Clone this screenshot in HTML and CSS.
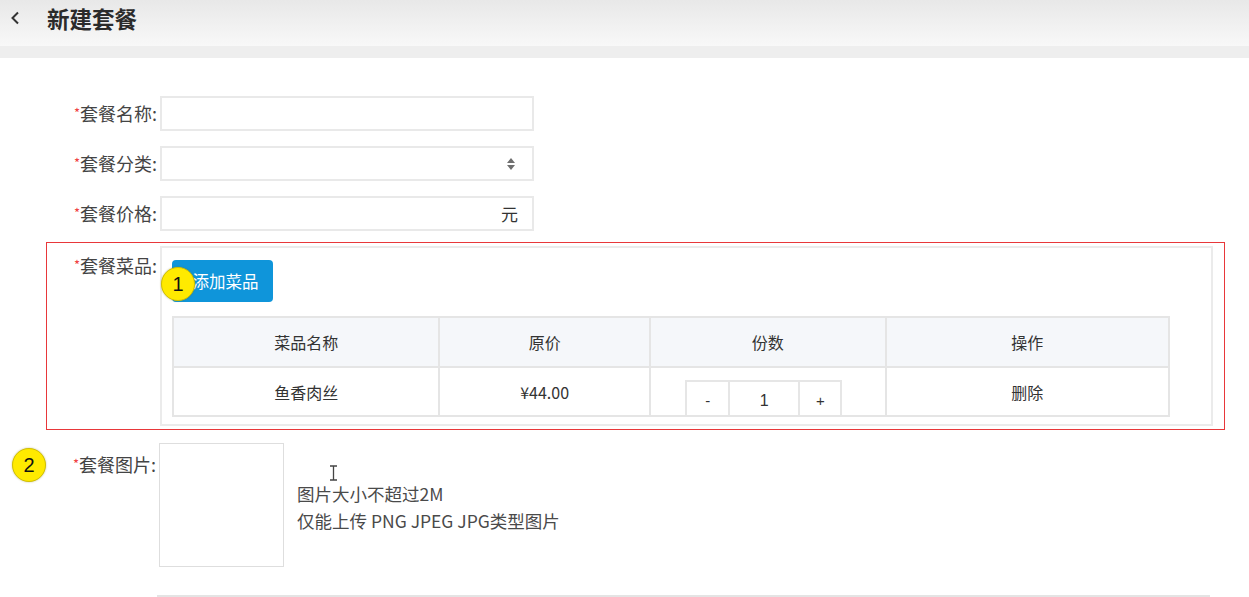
FILE: index.html
```html
<!DOCTYPE html>
<html lang="zh-CN">
<head>
<meta charset="utf-8">
<title>新建套餐</title>
<link rel="stylesheet" href="styles.css">
</head>
<body>
<div class="page">
  <div class="header">
    <svg class="back" width="10" height="14" viewBox="0 0 10 14"><path d="M8 1.5 L2.5 7 L8 12.5" stroke="#333" stroke-width="2" fill="none"/></svg>
    <span class="title">新建套餐</span>
  </div>
  <div class="band"></div>

  <div class="form">
    <div class="row">
      <label class="label"><span class="star">*</span>套餐名称:</label>
      <div class="input"></div>
    </div>
    <div class="row">
      <label class="label"><span class="star">*</span>套餐分类:</label>
      <div class="input select">
        <svg class="updown" width="10" height="14" viewBox="0 0 10 14"><path d="M5 1 L9 6 L1 6 Z M5 13 L1 8 L9 8 Z" fill="#6f6f6f"/></svg>
      </div>
    </div>
    <div class="row">
      <label class="label"><span class="star">*</span>套餐价格:</label>
      <div class="input price"><span class="unit">元</span></div>
    </div>

    <div class="row dish-row">
      <label class="label"><span class="star">*</span>套餐菜品:</label>
      <div class="dish-box">
        <button class="add-btn">添加菜品</button>
        <table class="dish-table">
          <thead>
            <tr><th class="c1">菜品名称</th><th class="c2">原价</th><th class="c3">份数</th><th class="c4">操作</th></tr>
          </thead>
          <tbody>
            <tr>
              <td>鱼香肉丝</td>
              <td>¥44.00</td>
              <td class="count-cell">
                <div class="counter"><span class="minus">-</span><span class="num">1</span><span class="plus">+</span></div>
              </td>
              <td>删除</td>
            </tr>
          </tbody>
        </table>
      </div>
    </div>

    <div class="row img-row">
      <label class="label"><span class="star">*</span>套餐图片:</label>
      <div class="upload"></div>
      <div class="tips">
        <div>图片大小不超过2M</div>
        <div>仅能上传 PNG JPEG JPG类型图片</div>
      </div>
    </div>

    <div class="footer-line"></div>
  </div>

  <span class="marker m1">1</span>
  <span class="marker m2">2</span>
  <svg class="ibeam" width="9" height="16" viewBox="0 0 9 16"><path d="M1 1 H8 M4.5 1 V15 M1 15 H8" stroke="#444" stroke-width="1.3" fill="none"/></svg>
</div>
</body>
</html>
```

FILE: styles.css
```css
* { box-sizing: border-box; }

body {
  margin: 0;
  background: #fff;
  font-family: "Noto Sans CJK SC", "Microsoft YaHei", sans-serif;
  color: #333;
}

.page {
  position: relative;
  width: 1249px;
  height: 597px;
  overflow: hidden;
}

.header {
  height: 46px;
  background: linear-gradient(#e8e8e8, #f8f8f8);
  display: flex;
  align-items: center;
  padding-left: 10px;
  padding-bottom: 10px;
}

.back {
  margin-right: 27px;
}

.title {
  font-size: 22.5px;
  font-weight: 700;
  line-height: 36px;
  color: #2b2b2b;
}

.band {
  height: 12px;
  background: #eeeeee;
}

.form {
  padding-top: 38px;
}

.row {
  display: flex;
  align-items: flex-start;
  margin-bottom: 15px;
}

.label {
  width: 160px;
  height: 35px;
  padding-right: 3px;
  text-align: right;
  font-size: 18px;
  line-height: 35px;
  color: #444;
  flex-shrink: 0;
  overflow: hidden;
}

.star {
  color: #f04040;
  font-size: 13px;
  line-height: 0;
  vertical-align: 3px;
}

.input {
  width: 374px;
  height: 35px;
  border: 2px solid #e9e9e9;
  background: #fff;
  display: flex;
  align-items: center;
  justify-content: flex-end;
  padding-right: 14px;
}

.updown {
  margin-right: 2px;
}

.unit {
  font-size: 17px;
  line-height: 1;
  color: #333;
}

.dish-row {
  margin-top: -4px;
  margin-left: 46px;
  width: 1179px;
  height: 188px;
  border: 1px solid #e8373a;
  padding: 3px 11px 2px 0;
  margin-bottom: 0;
}

.dish-row .label {
  width: 113px;
  height: 38px;
  line-height: 38px;
}

.dish-box {
  flex: 1;
  border: 2px solid #ebebeb;
  padding: 12px 10px 9px 10px;
  height: 180px;
}

.add-btn {
  display: block;
  width: 101px;
  height: 42px;
  border: none;
  border-radius: 4px;
  background: #0f95da;
  color: #fff;
  font-family: inherit;
  font-size: 16.5px;
  padding: 0 0 0 6px;
  margin-bottom: 14px;
}

.dish-table {
  width: 998px;
  border-collapse: collapse;
  border: 2px solid #e5e5e5;
  font-size: 16px;
  line-height: 20px;
  color: #333;
}

.dish-table th,
.dish-table td {
  border: 2px solid #e5e5e5;
  text-align: center;
  font-weight: 400;
  padding: 0;
}

.dish-table th {
  background: #f5f7fa;
  height: 50px;
}

.dish-table td {
  height: 49px;
}

.c1 { width: 267px; }
.c2 { width: 211px; }
.c3 { width: 236px; }
.c4 { width: 284px; }

.count-cell {
  vertical-align: bottom;
}

.counter {
  display: inline-flex;
  vertical-align: bottom;
  height: 35px;
  border: 2px solid #e6e6e6;
  border-bottom: none;
  margin-left: -8px;
  font-family: "Liberation Sans", sans-serif;
}

.counter span {
  display: flex;
  align-items: center;
  justify-content: center;
  padding-top: 4px;
}

.minus { width: 41px; font-size: 15px; }
.num { width: 72px; border-left: 2px solid #e6e6e6; border-right: 2px solid #e6e6e6; font-size: 16px; }
.plus { width: 40px; font-size: 15px; }

.img-row {
  margin-top: 13px;
  margin-bottom: 0;
}

.img-row .label {
  width: 159px;
  height: 42px;
  line-height: 42px;
}

.upload {
  width: 125px;
  height: 124px;
  border: 1px solid #dedede;
  flex-shrink: 0;
}

.tips {
  margin-left: 13px;
  padding-top: 37px;
  font-size: 17.5px;
  line-height: 27px;
  color: #4a4a4a;
}

.footer-line {
  margin-top: 28px;
  margin-left: 157px;
  width: 1053px;
  border-top: 2px solid #e4e4e4;
}

.marker {
  position: absolute;
  width: 34px;
  height: 34px;
  border-radius: 50%;
  background: #ffea00;
  border: 1px solid #d2c000;
  box-shadow: 0 0 2px rgba(120, 110, 0, 0.45);
  display: flex;
  align-items: center;
  justify-content: center;
  font-family: "Liberation Sans", sans-serif;
  font-size: 20px;
  color: #111;
}

.m1 { left: 161px; top: 267px; }
.m2 { left: 12px; top: 448px; }

.ibeam {
  position: absolute;
  left: 329px;
  top: 465px;
}
```
